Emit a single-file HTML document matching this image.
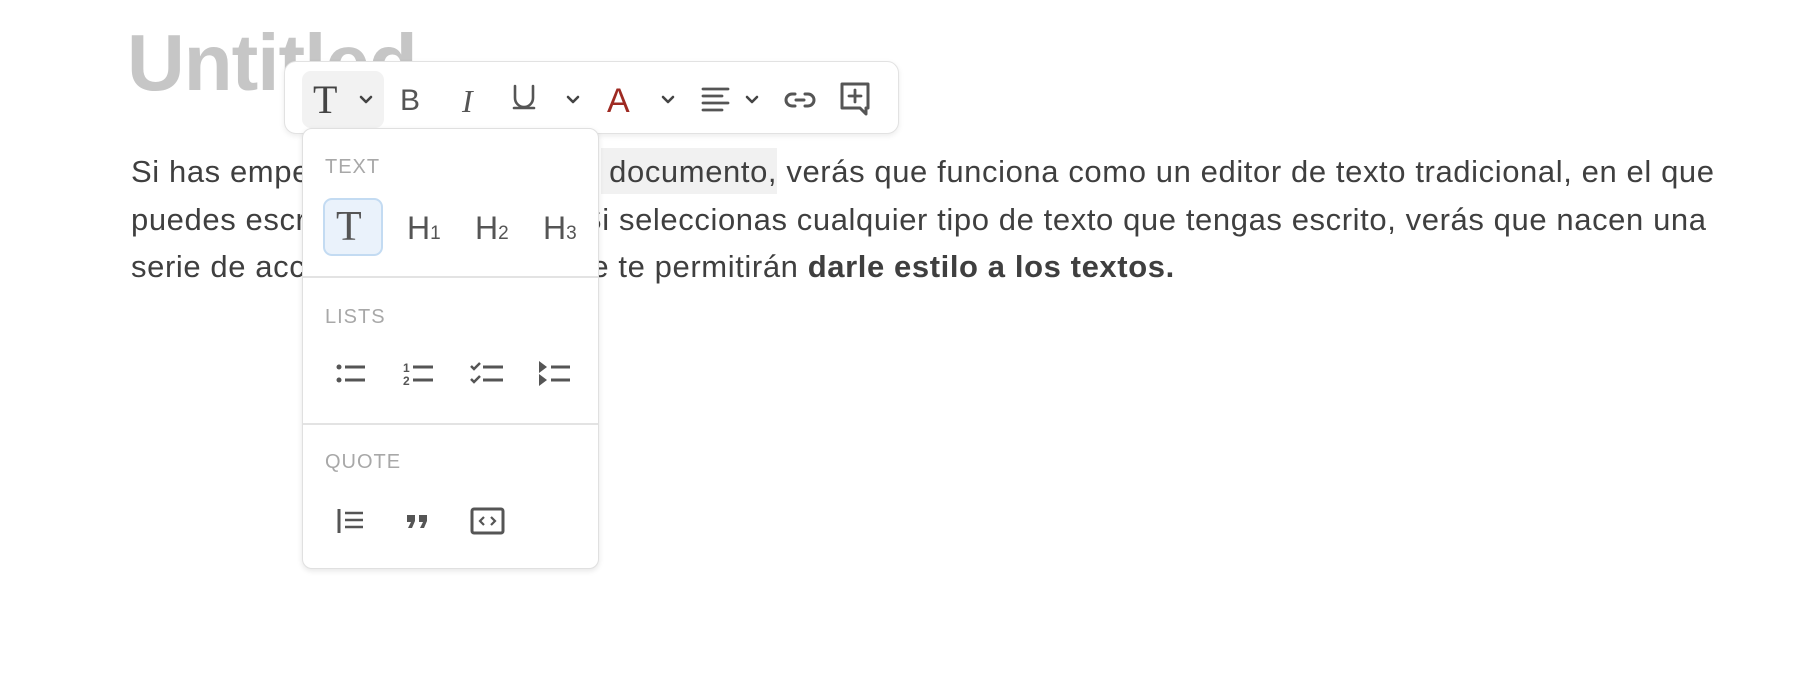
<!DOCTYPE html>
<html><head><meta charset="utf-8"><style>
*{margin:0;padding:0;box-sizing:border-box}
body{width:1808px;height:686px;background:#fff;position:relative;overflow:hidden;font-family:"Liberation Sans",sans-serif}
.title{position:absolute;left:127px;top:13px;font-size:80px;font-weight:bold;color:#c6c6c6;letter-spacing:-1px;line-height:100px}
.p{position:absolute;left:131px;font-size:31px;letter-spacing:0.6px;color:#3f3f3f;white-space:nowrap;line-height:32px}
.hl{position:absolute;left:601px;top:148px;width:176px;height:46px;background:#f1f1f1}
.tb{position:absolute;left:284px;top:61px;width:615px;height:73px;background:#fff;border:1px solid #e2e2e2;border-radius:12px;box-shadow:0 2px 6px rgba(0,0,0,.08)}
.ab{position:absolute}
.dd{position:absolute;left:302px;top:128px;width:297px;height:441px;background:#fff;border:1px solid #e0e0e0;border-radius:10px;box-shadow:0 2px 6px rgba(0,0,0,.1)}
.lbl{position:absolute;left:22px;font-size:20px;color:#a8a8a8;letter-spacing:1px}
.div{position:absolute;left:0;width:295px;height:2px;background:#e3e3e3}
</style></head><body>
<div class="title">Untitled</div>
<div class="hl"></div>
<div class="p" style="top:156px">Si has empezado a escribir en el documento, verás que funciona como un editor de texto tradicional, en el que</div>
<div class="p" style="top:204px">puedes escribir lo que quieras. Si seleccionas cualquier tipo de texto que tengas escrito, verás que nacen una</div>
<div class="p" style="top:251px">serie de acciones en la barra que te permitirán <b>darle estilo a los textos.</b></div>

<div class="tb">
 <div class="ab" style="left:17px;top:9px;width:82px;height:57px;background:#f2f2f2;border-radius:9px"></div>
 <div class="ab" style="left:28px;top:13px;font-family:'Liberation Serif',serif;font-size:40px;color:#444;line-height:50px">T</div>
 <svg class="ab" style="left:0;top:0" width="615" height="73" fill="none" stroke="#444" stroke-width="2.6" stroke-linecap="round" stroke-linejoin="round">
  <path d="M76 35l5 5 5-5"/>
  <path d="M283 35l5 5 5-5"/>
  <path d="M378 35l5 5 5-5"/>
  <path d="M462 35l5 5 5-5"/>
  <path d="M418 27h25M418 34h19M418 41h25M418 48h19" stroke-width="2.8" stroke="#555"/>
  <path d="M229 46h20" stroke="#555"/>
  <path d="M230 24v12a9 9 0 0 0 18 0v-12" stroke="#555"/>
  <path d="M510 32h-3a6 6 0 0 0 0 12h3M520 32h3a6 6 0 0 1 0 12h-3M511 38h8" stroke="#555" stroke-width="3"/>
  <path d="M557 22h26v24h-2v6l-6-6h-18z" stroke="#555" stroke-width="3"/>
  <path d="M570 28v12M564 34h12" stroke="#555" stroke-width="2.8"/>
 </svg>
 <div class="ab" style="left:115px;top:22px;font-size:30px;color:#555;line-height:34px">B</div>
 <div class="ab" style="left:177px;top:22px;font-family:'Liberation Serif',serif;font-style:italic;font-size:32px;color:#555;line-height:34px">I</div>
 <div class="ab" style="left:322px;top:20px;font-size:34px;color:#9e2a22;line-height:38px">A</div>
</div>

<div class="dd">
 <div class="lbl" style="top:27px">TEXT</div>
 <div class="ab" style="left:20px;top:69px;width:60px;height:58px;background:#eaf2fb;border:2px solid #c3dbf2;border-radius:9px"></div>
 <div class="ab" style="left:33px;top:76px;font-family:'Liberation Serif',serif;font-size:42px;color:#555;line-height:44px">T</div>
 <div class="ab" style="left:104px;top:82px;font-size:32px;color:#555;line-height:34px">H<span style="font-size:19px">1</span></div>
 <div class="ab" style="left:172px;top:82px;font-size:32px;color:#555;line-height:34px">H<span style="font-size:19px">2</span></div>
 <div class="ab" style="left:240px;top:82px;font-size:32px;color:#555;line-height:34px">H<span style="font-size:19px">3</span></div>
 <div class="div" style="top:147px"></div>
 <div class="lbl" style="top:177px">LISTS</div>
 <svg class="ab" style="left:0;top:220px" width="295" height="60" fill="none" stroke="#555" stroke-width="3">
  <circle cx="36" cy="18" r="2.5" fill="#555" stroke="none"/><circle cx="36" cy="31" r="2.5" fill="#555" stroke="none"/>
  <path d="M42 18h20M42 31h20"/>
  <text x="100" y="23" font-size="12" font-weight="bold" fill="#555" stroke="none" font-family="Liberation Sans">1</text>
  <text x="100" y="36" font-size="12" font-weight="bold" fill="#555" stroke="none" font-family="Liberation Sans">2</text>
  <path d="M110 18h20M110 31h20"/>
  <path d="M168 17l3 3 6-6M168 30l3 3 6-6" stroke-width="2.5"/>
  <path d="M180 18h20M180 31h20"/>
  <path d="M236 12l8 6-8 6zM236 25l8 6-8 6z" fill="#555" stroke="none"/>
  <path d="M248 18h19M248 31h19"/>
 </svg>
 <div class="div" style="top:294px"></div>
 <div class="lbl" style="top:322px">QUOTE</div>
 <svg class="ab" style="left:0;top:370px" width="295" height="50" fill="none" stroke="#555">
  <path d="M36 10v24" stroke-width="3"/>
  <path d="M42 14h18M42 21h18M42 28h18" stroke-width="2.6"/>
  <path d="M104 16h8v6l-3 7h-4l3-6h-4zM116 16h8v6l-3 7h-4l3-6h-4z" fill="#555" stroke="none"/>
  <rect x="169" y="10" width="31" height="24" rx="2" stroke-width="3"/>
  <path d="M181 18l-4 4 4 4M188 18l4 4-4 4" stroke-width="2.2"/>
 </svg>
</div>
</body></html>
